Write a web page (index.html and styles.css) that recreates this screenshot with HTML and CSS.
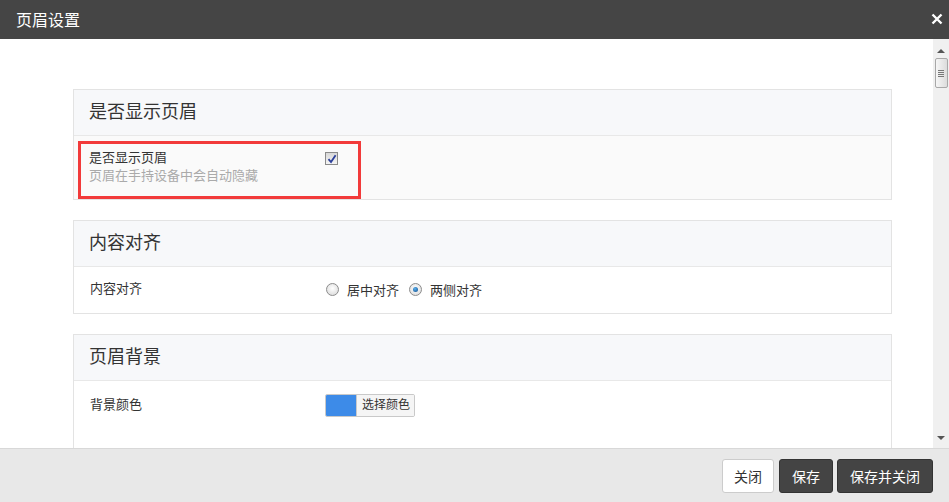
FILE: index.html
```html
<!DOCTYPE html>
<html>
<head>
  <meta charset="utf-8">
  <title>页眉设置</title>
  <link rel="stylesheet" href="styles.css">
</head>
<body>
  <div class="modal">
    <div class="modalHead">
      <span class="modalTitle">页眉设置</span>
      <svg class="closeX" width="12" height="12" viewBox="0 0 12 12"><path d="M1.5 1.5 L10.5 10.5 M10.5 1.5 L1.5 10.5" stroke="#fff" stroke-width="2.4"/></svg>
    </div>
    <div class="modalMain">
      <div class="content">
        <div class="panel">
          <div class="panelHead">是否显示页眉</div>
          <div class="panelBody bodyGray">
            <div class="row rowMarked">
              <div class="labelCol">
                <div class="label">是否显示页眉</div>
                <div class="hint">页眉在手持设备中会自动隐藏</div>
              </div>
              <div class="fieldCol">
                <span class="checkBox">
                  <svg width="10" height="10" viewBox="0 0 10 10"><path d="M1.5 5.2 L4 8 L8.6 1.2" fill="none" stroke="#2b3f9a" stroke-width="1.8"/></svg>
                </span>
              </div>
            </div>
          </div>
        </div>

        <div class="panel">
          <div class="panelHead">内容对齐</div>
          <div class="panelBody">
            <div class="row rowPlain">
              <div class="labelCol"><div class="label">内容对齐</div></div>
              <div class="fieldCol">
                <span class="radio"></span><span class="radioText">居中对齐</span>
                <span class="radio radioOn"></span><span class="radioText">两侧对齐</span>
              </div>
            </div>
          </div>
        </div>

        <div class="panel">
          <div class="panelHead">页眉背景</div>
          <div class="panelBody">
            <div class="row rowColor">
              <div class="labelCol"><div class="label">背景颜色</div></div>
              <div class="fieldCol">
                <span class="colorBtn"><span class="swatch"></span><span class="colorText">选择颜色</span></span>
              </div>
            </div>
          </div>
        </div>
      </div>
      <div class="scrollBar">
        <div class="arrowUp"></div>
        <div class="thumb"><span></span><span></span><span></span><span></span></div>
        <div class="track"></div>
        <div class="arrowDown"></div>
      </div>
    </div>
    <div class="modalFoot">
      <button class="btn btnLight">关闭</button>
      <button class="btn btnDark">保存</button>
      <button class="btn btnDark">保存并关闭</button>
    </div>
  </div>
</body>
</html>
```

FILE: styles.css
```css
html, body {
  margin: 0;
  padding: 0;
}

body {
  font-family: "Liberation Sans", "Noto Sans CJK SC", sans-serif;
  color: #333;
  background-color: #fff;
}

.modal {
  width: 949px;
  height: 502px;
  display: flex;
  flex-direction: column;
  overflow: hidden;
}

.modalHead {
  height: 39px;
  background-color: #454545;
  display: flex;
  align-items: center;
  justify-content: space-between;
  padding: 0 6px 0 16px;
  box-sizing: border-box;
  color: #fff;
}

.modalTitle {
  font-size: 16px;
  margin-top: -2px;
}

.closeX {
  margin-top: -2px;
}

.modalMain {
  height: 409px;
  display: flex;
  overflow: hidden;
}

.content {
  flex: 1;
  padding: 50px 41px 0 73px;
  overflow: hidden;
}

.panel {
  border: 1px solid #e3e3e3;
  margin-bottom: 20px;
}

.panelHead {
  height: 45px;
  line-height: 45px;
  padding-left: 15px;
  font-size: 18px;
  background-color: #f7f8fa;
  border-bottom: 1px solid #e8e8e8;
}

.panelBody {
  padding: 5px 5px 0 5px;
}

.bodyGray {
  background-color: #fafafa;
  padding: 5px 0 0 4px;
}

.row {
  display: flex;
  font-size: 13px;
  box-sizing: border-box;
}

.rowMarked {
  width: 283px;
  height: 58px;
  border: 3px solid #f23a3a;
  padding: 5px 0 0 8px;
}

.rowPlain {
  height: 41px;
  padding: 8px 0 0 11px;
}

.rowColor {
  height: 80px;
  padding: 10px 0 0 11px;
}

.labelCol {
  width: 236px;
}

.label {
  line-height: 18px;
}

.hint {
  color: #aaa;
  line-height: 18px;
}

.checkBox {
  display: inline-flex;
  align-items: center;
  justify-content: center;
  width: 11px;
  height: 11px;
  border: 1px solid #8a8a8a;
  background: linear-gradient(#d8d8d8, #f4f4f4);
  margin-top: 3px;
}

.rowPlain .fieldCol {
  display: flex;
  align-items: center;
  height: 18px;
}

.radio {
  width: 11px;
  height: 11px;
  border-radius: 50%;
  border: 1px solid #8c8c8c;
  background: radial-gradient(circle at 50% 40%, #fff, #d6d6d6);
  margin-right: 8px;
  box-sizing: content-box;
  position: relative;
}

.radioOn::after {
  content: "";
  position: absolute;
  left: 3px;
  top: 3px;
  width: 5px;
  height: 5px;
  border-radius: 50%;
  background: radial-gradient(circle at 40% 35%, #5ab0ee, #0f4c8a);
}

.radioText {
  margin-right: 10px;
}

.colorBtn {
  display: inline-flex;
  height: 23px;
  border: 1px solid #c9c9c9;
  border-radius: 2px;
  overflow: hidden;
  margin-top: -2px;
  margin-left: -1px;
  box-sizing: border-box;
}

.swatch {
  width: 30px;
  background-color: #3d8be8;
  border-right: 1px solid #c9c9c9;
}

.colorText {
  font-size: 12px;
  padding: 0 4px 0 5px;
  line-height: 21px;
  background-color: #f5f5f5;
}

.scrollBar {
  width: 16px;
  background-color: #f0f0f0;
  display: flex;
  flex-direction: column;
  align-items: center;
}

.arrowUp {
  margin-top: 10px;
  width: 0;
  height: 0;
  border-left: 4px solid transparent;
  border-right: 4px solid transparent;
  border-bottom: 4px solid #555;
}

.thumb {
  margin-top: 5px;
  width: 13px;
  height: 30px;
  border: 1px solid #a8a8a8;
  border-radius: 2px;
  background: linear-gradient(to right, #f6f6f6, #dcdcdc);
  display: flex;
  flex-direction: column;
  align-items: center;
  justify-content: center;
  gap: 1px;
  box-sizing: border-box;
}

.thumb span {
  width: 6px;
  height: 1px;
  background-color: #777;
}

.track {
  flex: 1;
}

.arrowDown {
  margin-bottom: 8px;
  width: 0;
  height: 0;
  border-left: 4px solid transparent;
  border-right: 4px solid transparent;
  border-top: 4px solid #555;
}

.modalFoot {
  flex: 1;
  background-color: #e8e8e8;
  border-top: 1px solid #d8d8d8;
  display: flex;
  justify-content: flex-end;
  align-items: center;
  padding-right: 16px;
}

.btn {
  height: 34px;
  font-size: 14px;
  font-family: "Liberation Sans", "Noto Sans CJK SC", sans-serif;
  border-radius: 3px;
  border: 1px solid #ccc;
  margin-top: 1px;
}

.btnLight {
  background-color: #fff;
  color: #333;
  padding: 0 11px;
  margin-right: 1px;
}

.btnDark {
  background-color: #444;
  border-color: #333;
  color: #fff;
  padding: 0 12px;
  margin-left: 4px;
}
```
